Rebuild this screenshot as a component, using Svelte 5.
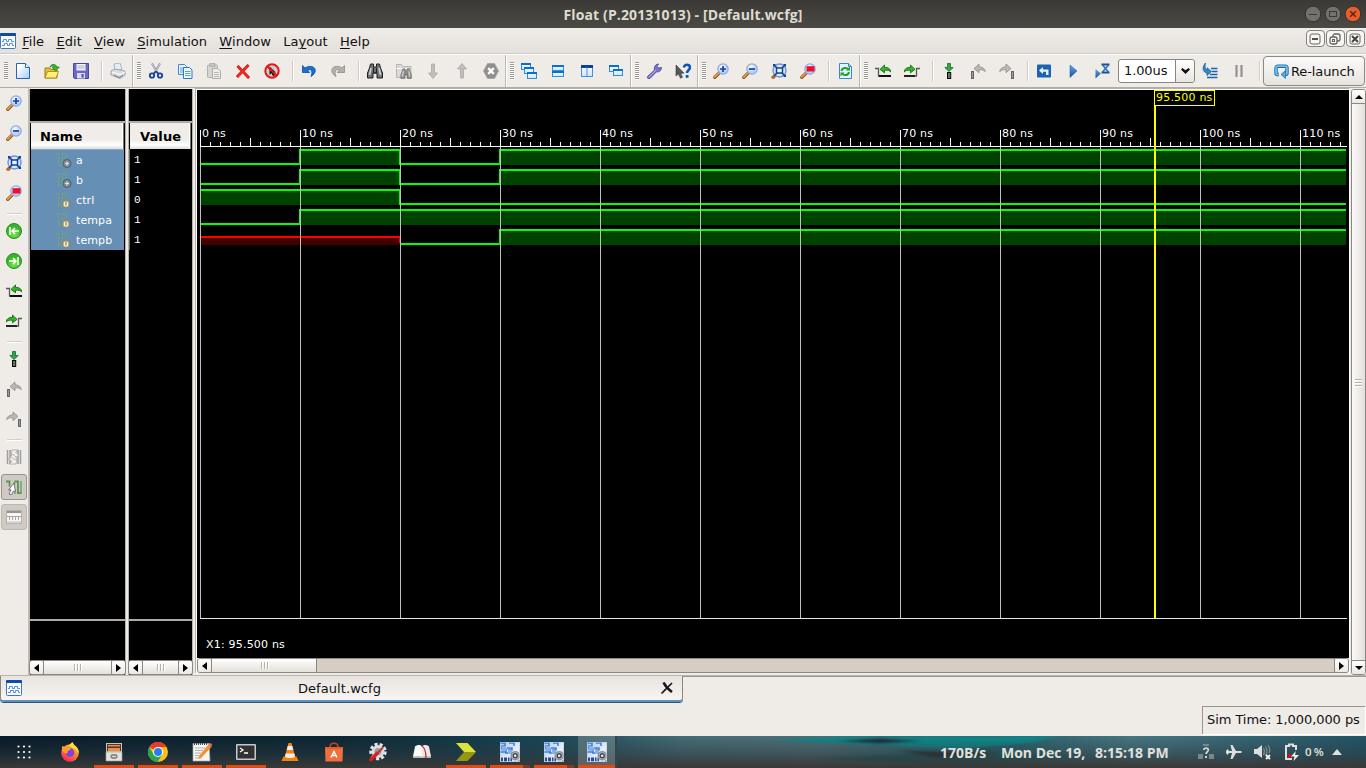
<script>
  const menus = ['File', 'Edit', 'View', 'Simulation', 'Window', 'Layout', 'Help'];
  const hot = { Layout: 2 };

  const lens = '<path d="M1.8 14.4 7 9.2" stroke="#8a4a12" stroke-width="3.2" stroke-linecap="round"/><path d="M1.8 14 6.6 9.2" stroke="#e39a3c" stroke-width="1.8" stroke-linecap="round"/><circle cx="10" cy="6" r="5.2" fill="url(#glass)" stroke="#8fa6e6" stroke-width="1.2"/>';
  const greenLeft = '<path d="M5 5.4 9.5 1v2.4c3.5-.2 6 1.200 6.300 4.600-1.300-1.600-3.200-2-6.300-1.800v2.600z" fill="#35b528" stroke="#0e6d14" stroke-width=".9"/>';
  const greenRight = '<path d="M11 5.400 6.500 1v2.400C3 3.200.5 4.600.2 8 1.500 6.400 3.400 6 6.500 6.200v2.600z" fill="#35b528" stroke="#0e6d14" stroke-width=".9"/>';
  const wfile = '<rect x=".5" y=".5" width="15" height="15" rx="1" fill="#f7faff" stroke="#4275c4"/><rect width="16" height="3" rx="1" fill="#0c4ba8"/><path d="M2 8.500h1.500v-2h3v2h2v-2h3v2H14M2 12.500h2.500v-2h3v2h2v-2h3v2H14" fill="none" stroke="#4c7fe0" stroke-width=".9"/>';
  const bino = '<path d="M3.500 1h3v3h3V1h3l1 4 2 5v5h-5.500v-5H6v5H.500v-5l2-5z" fill="#707476" stroke="#1e1f20"/><path d="M4 5 2.500 12M12 5l1.500 7" stroke="#cfd3d6" stroke-width="1.600"/><path d="M6.500 5v5h3V5" fill="none" stroke="#1e1f20"/>';
  const win = (x, y, w, h) => `<rect x="${x}.5" y="${y}.5" width="${w}" height="${h}" fill="url(#pane)" stroke="#2b90e0"/><path d="M${x} ${y + 1}h${w + 1}" stroke="#0a6fd0" stroke-width="2"/>`;
  const art = {
    new: '<path d="M1.500.5h9l4 4v11h-13z" fill="url(#page)" stroke="#2c62b4"/><path d="M10.500.5v4h4" fill="#fff" stroke="#2c62b4"/>',
    open: '<path d="M1 5h5l1 1.500h6V15H1z" fill="#e2c43a" stroke="#9a7b12"/><path d="M3.500 8.500h11L12 15H1z" fill="#fff07a" stroke="#b3921a"/><path d="M6 4C7 .8 12 .2 12.600 4H15.300L11.500 8 8 4h2.300C10 2.300 8 2.500 6 4z" fill="#3cbc25" stroke="#147d18" stroke-width=".8"/>',
    save: '<path d="M.5.500h15v15h-14l-1-1z" fill="#6b68c8" stroke="#4a4799"/><path d="M3.500 1h9v6.500h-9z" fill="#f4f4fb"/><path d="M4.500 3h7M4.500 5h7" stroke="#a9a9c0"/><path d="M4 10h8v5.500H4z" fill="#dcdcf0"/><path d="M8.500 11h2.200v3.500H8.500z" fill="#5553a8"/>',
    print: '<path d="m4 1 6-1 2 6-7 2z" fill="#e3edf7" stroke="#a3b6cc"/><path d="M1 8l4-2 10 2v4l-5 3.500L1 12z" fill="#dcdcdf" stroke="#a3a3a8"/><path d="m2 9 8 2.500L15 9" fill="none" stroke="#fff"/><path d="m4 12 5 2.500 4-2.200" fill="none" stroke="#6f7c8d"/>',
    cut: '<path d="M4 .5 10 11M12 .5 6 11" stroke="#8591a0" stroke-width="2"/><path d="M4.200 1 9 9.500M11.800 1 7 9.500" stroke="#dfe5ec" stroke-width=".7"/><circle cx="4" cy="12.500" r="2.200" fill="none" stroke="#16419e" stroke-width="1.800"/><circle cx="12" cy="12.500" r="2.200" fill="none" stroke="#16419e" stroke-width="1.800"/><path d="m5.500 10.500 2.500-2 2.500 2" fill="none" stroke="#16419e" stroke-width="1.600"/>',
    copy: '<path d="M1.500 1.500h6l2 2v8h-8z" fill="#e7f3ff" stroke="#3b8ad6"/><path d="M3 5h4M3 7h3M3 9h3" stroke="#5aa2e2"/><path d="M6.500 4.500h6l2.500 2.500v8.500H6.500z" fill="#f0f8ff" stroke="#2a7ac8"/><path d="M8 8.500h5.500M8 10.500h5.500M8 12.500h5.500" stroke="#5aa2e2"/>',
    paste: '<rect x="1.500" y="2" width="10" height="12.500" rx="1" fill="#d7d5d1" stroke="#b3b1ad"/><rect x="4" y=".5" width="5" height="3" fill="#c5c3bf" stroke="#aaa8a4" stroke-width=".7"/><path d="M6.500 5.500h5.500l2.500 2.500v7.500h-8z" fill="#eeedea" stroke="#b0aeaa"/><path d="M8 9.500h5M8 11.500h5M8 13.500h5" stroke="#bcbab6"/>',
    del: '<path d="m2.500 3 11.500 12M13.500 2 2 14" stroke="#c81010" stroke-width="2.800"/><path d="m2.500 3 11.500 12M13.500 2 2 14" stroke="#fb2418" stroke-width="2"/>',
    stop: '<circle cx="8" cy="8" r="6.700" fill="#cfcdca" stroke="#e81515" stroke-width="2"/><path d="M5.500 3.500V12l2-1.800 1.500 3 2-1-1.400-2.800H12z" fill="#17181a"/><path d="m3.500 3.500 9 9" stroke="#e81515" stroke-width="2"/>',
    undo: '<path d="M1.500 2.500v7h7.200L6.600 7.300C9.500 5.500 12.500 7.500 10 13.500 16 10 15.500 3.600 9.500 3.400 7.200 3.300 5.300 4 3.900 5z" fill="#1971cf" stroke="#0b479d" stroke-width=".8"/>',
    redo: '<path d="M14.500 2.500v7H7.300L9.400 7.300C6.500 5.500 3.500 7.500 6 13.500 0 10 .5 3.600 6.500 3.400c2.300-.1 4.200.6 5.600 1.600z" fill="#b3b1ae" stroke="#8c8a87" stroke-width=".8"/>',
    find: bino,
    findf: '<path d="M.5 1.500h5l1.500 2h8v11H.500z" fill="#dbd9d6" stroke="#b7b5b1"/><path d="M.5 5.500h11" stroke="#fff"/><g transform="translate(4.500 5) scale(.7)" opacity=".6">' + bino + '</g>',
    down: '<path d="M6.500 1h3v9h3L8 15.500 3.500 10h3z" fill="#c0beba" stroke="#a9a7a3" stroke-width=".8"/>',
    up: '<path d="M6.500 15h3V6h3L8 .5 3.500 6h3z" fill="#c0beba" stroke="#a9a7a3" stroke-width=".8"/>',
    halt: '<path d="M4.500.5h7L15.500 8l-4 7.500h-7L.500 8z" fill="#8e8e8d" stroke="#aaa9a7"/><path d="m5.200 5.200 5.600 5.600m0-5.600-5.600 5.600" stroke="#fff" stroke-width="2.400"/>',
    cascade: win(0, 0, 9, 6) + win(3, 4, 9, 6) + win(6, 9, 9, 6),
    tileh: win(2, 2, 11, 5) + win(2, 8, 11, 5),
    tilev: '<rect x="2.500" y="2.500" width="11" height="11" fill="url(#pane)" stroke="#4a8ed8"/><path d="M2 3.500h12" stroke="#0b3f9e" stroke-width="3"/><path d="M8 4v9.500" stroke="#4a8ed8"/>',
    float: win(1, 2, 9, 6) + win(5, 6, 9, 6),
    wrench: '<path d="M1.500 13.500 8.500 7c-.8-3 1-6 4-6l-1.500 2.500 1 1.500 3.500-.5c0 3-2.500 5-5 4.300L4 15.500c-1.500 1-3.500-.5-2.500-2z" fill="#7975cf" stroke="#444091" stroke-width=".8"/><path d="m3 14 7-7" stroke="#b6b3ee"/>',
    help: '<path d="M1 2v11l2.500-2 2 4.200 2-1-2-4H9z" fill="#55585a" stroke="#36383a" stroke-width=".6"/><path d="M9 4.500C9 .8 15 .9 15 4.500c0 2.500-3 2.500-3 5.500" fill="none" stroke="#0d53ba" stroke-width="2.500"/><rect x="10.700" y="12" width="2.800" height="2.800" fill="#0d53ba"/>',
    zin: lens + '<path d="M7 6h6M10 3v6" stroke="#1c3d98" stroke-width="1.700"/>',
    zout: lens + '<path d="M7 6h6" stroke="#1c3d98" stroke-width="1.700"/>',
    zfull: '<path d="m1 15.500 3-3" stroke="#c26f1c" stroke-width="3.500"/><circle cx="8.500" cy="7.500" r="6.500" fill="#d8e8ff" stroke="#6d93e2" stroke-width="1.400"/><path d="m3 2 11 11M14 2 3 13" stroke="#16448c" stroke-width="1.600"/><rect x="5.500" y="5" width="6" height="5" fill="#e6f2ff" stroke="#16448c" stroke-width="1.500"/><path d="M2 1h3L2 4zM15 1h-3l3 3zM15 14h-3l3-3z" fill="#16448c"/>',
    zarea: lens + '<rect x="6.500" y="3.200" width="8" height="5.300" fill="#ee0d2b"/>',
    reload: '<path d="M2.500.5h9l3 3v12h-12z" fill="#e4f2ff" stroke="#3987cf"/><path d="M11.500.5v3h3" fill="#9bc8f0" stroke="#3987cf"/><path d="M4.500 8C5 4.500 10 4 11 6.500M12 9c-.5 3.500-5.500 4-6.500 1.500" fill="none" stroke="#1fa326" stroke-width="2"/><path d="M9 7.500h4v-4zM7.500 9.500h-4v4z" fill="#1fa326"/>',
    prev: '<g transform="translate(0 1)">' + greenLeft + '<path d="M0 4.500h3.500v7.500H16" fill="none" stroke="#57595a" stroke-width="1.300"/><path d="M4 12h12" stroke="#111" stroke-width="2"/></g>',
    next: '<g transform="translate(0 1)">' + greenRight + '<path d="M16 4.500h-3.500V12H0" fill="none" stroke="#57595a" stroke-width="1.300"/><path d="M0 12h11" stroke="#222" stroke-width="2"/></g>',
    marker: '<path d="M6.500.500h3v4h2.700L8 8.500 3.800 4.500h2.700z" fill="#31a64a" stroke="#136b2c" stroke-width=".8"/><rect x="6.500" y="9.500" width="3.200" height="6" fill="#68706a" stroke="#080808"/>',
    mprev: '<path d="M4 5.500 9 1v2.800c3.500.2 6 1.700 6.300 4.700-2-1.700-4-1.900-6.300-1.800v3z" fill="#bbb9b6" stroke="#8f8d8a" stroke-width=".8"/><rect x="1.500" y="8.500" width="2" height="7" fill="#999" stroke="#666"/>',
    mnext: '<path d="M12 5.500 7 1v2.800C3.500 4 1 5.500.7 8.500 2.700 6.800 4.700 6.600 7 6.700v3z" fill="#bbb9b6" stroke="#8f8d8a" stroke-width=".8"/><rect x="12.500" y="8.500" width="2" height="7" fill="#999" stroke="#666"/>',
    restart: '<rect x="1" y="1.500" width="14" height="13" rx="1" fill="#1d62b5"/><path d="m3 7.500 4-3.500v2.500h5.500V12H10V8.800H7V11z" fill="#e5f3ff"/>',
    run: '<path d="M5 2v12.500L12 8z" fill="url(#blue)" stroke="#1855a2" stroke-width=".5"/>',
    runfor: '<path d="M1.500 6v9.500L7 10.500z" fill="url(#blue)"/><path d="M7.500 1.500h8M7.500 9.500h8" stroke="#15539f" stroke-width="1.800"/><path d="m8.500 2 6 7m0-7-6 7" stroke="#2768b4" stroke-width="1.300"/>',
    step: '<path d="M3.500 0C-.5 4.500 1 9.500 5 10v2.500L9.500 8.500 5 4.800v2.500C3 6.500 2.500 3.500 3.500 0z" fill="#2490d0" stroke="#125b9f" stroke-width=".8"/><path d="M9 5.500h6.500M10 8.500h5.500M8 11.500h7.500M5 14.500h10.500" stroke="#1c62ad" stroke-width="1.300"/>',
    pause: '<path d="M5.500 2v12M10.500 2v12" stroke="#94928f" stroke-width="2.200"/>',
    first: '<circle cx="8" cy="8" r="7.500" fill="url(#ball)" stroke="#26901f"/><path d="M4 4v8M13 8H6.500M9 5 6 8l3 3" fill="none" stroke="#fff" stroke-width="1.500"/>',
    last: '<circle cx="8" cy="8" r="7.500" fill="url(#ball)" stroke="#26901f"/><path d="M12 4v8M3 8h6.500M7 5l3 3-3 3" fill="none" stroke="#fff" stroke-width="1.500"/>',
    swap: '<path d="M1.500 1v14M4 1v14M12 1v14M14.500 1v14" stroke="#a19f9b" stroke-width="1.500"/><path d="M6 1h6L9.500 3.500 13 6l-3 2-3-3-2 2zM10 15H3l3-2.500L2.500 10l3-2 3 3L11 9z" fill="#f3f1ee" stroke="#9d9b97" stroke-width=".7"/>',
    snap: '<path d="M0 2.500h3.500v5M8.500 2.500H12V14h3.500" fill="none" stroke="#5d9355" stroke-width="1.800"/><path d="M8.500 2.500V6M15 2v12M8 14h2" stroke="#6aa860" stroke-width="1.500"/><path d="M8 4 2.500 11l2.500-.2L3 15l2.500.8L7.500 12l2 .5z" fill="#fff" stroke="#555" stroke-width=".8"/>',
    table: '<rect x=".5" y="1.500" width="15" height="13" fill="#f7f6f4" stroke="#b5b3af"/><path d="M1 3h14" stroke="#96948f" stroke-width="2"/><path d="M1 7.500h14" stroke="#a9a7a2"/><path d="M3.500 8v3M6.500 8v3M9.500 8v3M12.500 8v3" stroke="#a9a7a2"/><path d="M1 13h14" stroke="#dad8d4" stroke-width="2"/>',
    wfile
  };

  const groups = [
    { head: 8, items: ['new', 'open', 'save', '|', 'print'] },
    { head: 9, items: ['cut', 'copy', 'paste', 'del', 'stop', '|', 'undo', 'redo', '|', 'find', 'findf', 'down', 'up', 'halt'] },
    { head: 9, items: ['cascade', 'tileh', 'tilev', 'float'] },
    { head: 9, items: ['wrench', 'help'] },
    { head: 9, items: ['zin', 'zout', 'zfull', 'zarea', '|', 'reload'] }
  ];
  const runItems = ['prev', 'next', '|', 'marker', 'mprev', 'mnext', '|', 'restart', 'run', 'runfor'];
  const side = ['zin', 'zout', 'zfull', 'zarea', '|', 'first', 'last', 'prev', 'next', '|', 'marker', 'mprev', 'mnext', '|', 'swap', 'snap', 'table'];

  const signals = [
    { name: 'a', value: '1', kind: 'port', spans: [[0, 10, 0], [10, 20, 1], [20, 30, 0], [30, 114.6, 1]] },
    { name: 'b', value: '1', kind: 'port', spans: [[0, 10, 0], [10, 20, 1], [20, 30, 0], [30, 114.6, 1]] },
    { name: 'ctrl', value: '0', kind: 'net', spans: [[0, 20, 1], [20, 114.6, 0]] },
    { name: 'tempa', value: '1', kind: 'net', spans: [[0, 10, 0], [10, 114.6, 1]] },
    { name: 'tempb', value: '1', kind: 'net', spans: [[0, 20, 'x'], [20, 30, 0], [30, 114.6, 1]] }
  ];
  // Wave canvas: time zero sits 3px from the left edge, 10px per nanosecond.
  const px = (ns) => 3 + ns * 10;
  const ticks = Array.from({ length: 115 }, (_, i) => i);
  const majors = ticks.filter((t) => t % 10 === 0);

  const apps = [
    { id: 'grid' }, { id: 'firefox' }, { id: 'files', on: 1 }, { id: 'chrome', on: 1 }, { id: 'edit', on: 1 },
    { id: 'term', on: 1 }, { id: 'vlc' }, { id: 'store' }, { id: 'tools' }, { id: 'book' },
    { id: 'xil', on: 1 }, { id: 'isim', on: 2 }, { id: 'isim', on: 2 }, { id: 'isim', on: 1, active: true }
  ];
  const isim = '<rect width="20" height="20" fill="url(#sim)"/><path d="M0 1h5v3H2v3h4v3H0M7 6h5v2H9v3H5M9 1h5v3" fill="none" stroke="#3f7ed6" stroke-width="1.500"/><path d="M2 4h4v5H2zM8 8h4v4H8z" fill="#86b1ea"/><path d="M0 14.500h13V20H0z" fill="#dfe5f0"/><path d="M1 15.500h2v4H1zM4 15.500h3v4H4zM8 15.500h1.500v4H8zM10.500 15.500h1.500v4h-1.500z" fill="#274a94"/><circle cx="15.200" cy="13.700" r="4" fill="#c7ccd4" stroke="#8c929b" stroke-width="1.500"/><circle cx="15.200" cy="13.700" r="2" fill="#eceef0" stroke="#3d4248" stroke-width="1.400"/><path d="M18 18h2v2h-2z" fill="#e08080"/><rect x=".3" y=".3" width="19.400" height="19.400" fill="none" stroke="#b9c6dc" stroke-width=".6"/>';
  const appArt = {
    grid: [4.500, 10, 15.500].map((y) => [4.500, 10, 15.500].map((x) => `<circle cx="${x}" cy="${y}" r="1.100" fill="#fff"/>`).join('')).join(''),
    firefox: '<circle cx="10" cy="11" r="8.800" fill="url(#fox)"/><path d="M9 4c3-5 4-3.500 4-3.500.2 3 6 4 5.800 11C17 7.500 14 6 9 4z" fill="#ffdf38"/><circle cx="10" cy="10.500" r="4.300" fill="#7944d8"/><path d="M2 4c2 .5 4 2 7 2 2 0 2 2 0 2.500C7 9 7 10 8 11c-3 1-5-.5-6-3z" fill="#ff9e23"/>',
    files: '<path d="M2 1h16v18H2z" fill="#c7c5c0"/><path d="M3 2h14v7H3z" fill="#51372b"/><path d="M4 3h12v1.500H4zM4 6h12v3H4z" fill="#ee8d45"/><path d="M2 10h16v9H2z" fill="#e4e2de" stroke="#a09e9a" stroke-width=".6"/><rect x="7" y="13" width="6" height="3" rx="1.500" fill="none" stroke="#76746f" stroke-width="1.300"/>',
    chrome: '<circle cx="10" cy="10" r="10" fill="#fbc116"/><path d="M10 10 1.300 5A10 10 0 0 1 18.700 5H10z" fill="#e33b2e"/><path d="M1.300 5A10 10 0 0 0 9.500 20l4.800-7.500H5.700z" fill="#2da44e"/><circle cx="10" cy="10" r="5.100" fill="#fff"/><circle cx="10" cy="10" r="4" fill="#2c7de9"/>',
    edit: '<path d="M1 1.500h16l1 17.500H1z" fill="#f5f5f3" stroke="#aaa" stroke-width=".7"/><path d="M2 2h14" stroke="#4b4b4b" stroke-width="2" stroke-dasharray="1 1"/><path d="M3 6h10M3 8.500h8M3 11h6M3 13.500h4M3 16h7" stroke="#b2b2b0"/><path d="m7 14 9-11 3.500 2L10 15l-4 2z" fill="#f39330"/><path d="m16 3 3.500 2 .5-3-2-1z" fill="#e57165"/>',
    term: '<rect x="0" y="2" width="20" height="16" rx="1" fill="#c9c8c6"/><rect x="1.500" y="3.500" width="17" height="13" fill="#313235"/><path d="m4 6 3 2-3 2M8 11h4" fill="none" stroke="#fff" stroke-width="1.300"/>',
    vlc: '<path d="M3.500 14.500h13L18.500 19h-17z" fill="#f28310"/><path d="M8.500 1h3l4 15h-11z" fill="#f58616"/><path d="m7.700 4-1 4h6.600l-1-4zM5.700 11.500l-.8 3c2 2 8 2 10.200 0l-.8-3z" fill="#eeece8"/>',
    store: '<path d="M1 5h18l-.5 14.500h-17z" fill="#ef703d"/><path d="M6 5C6 0 14 0 14 5" fill="none" stroke="#c7421d" stroke-width="1.500"/><path d="M1 5h18v2H1z" fill="#e2602f"/><path d="m7 15.500 3-6 3 6M8 13.500h4" fill="none" stroke="#fff" stroke-width="1.400"/>',
    tools: '<circle cx="10" cy="9.500" r="7" fill="none" stroke="#e4e4e4" stroke-width="3.500" stroke-dasharray="3 1.900"/><circle cx="10" cy="9.500" r="5" fill="#9b9da2" stroke="#dcdcdc" stroke-width="3"/><path d="M3 17.500 9 11.500" stroke="#d82029" stroke-width="3.800" stroke-linecap="round"/><path d="m9 11.500 6-6" stroke="#c33036" stroke-width="2"/>',
    book: '<path d="M3 4 1 16h18L17 4z" fill="#b8b8b5"/><path d="M3.500 4C6 2.500 9 3 10 4.500V15c-2-1.500-6-1-9-.5z" fill="#fafaf8"/><path d="M16.500 4C14 2.500 11 3 10 4.500V15c2-1.500 6-1 9-.5z" fill="#e9e9e6"/><path d="M9.500 4c3 1 4.500 4 4.500 12" fill="none" stroke="#cc2930" stroke-width="1.300"/>',
    xil: '<path d="M0 1h11.500l8.500 9H8z" fill="#dde23a"/><path d="M8 10h12l-8.500 9H0z" fill="#949712"/>',
    isim
  };
</script>

{#snippet icon(id)}
  <svg class="ico" width="16" height="16" viewBox="0 0 16 16" fill="none">{@html art[id]}</svg>
{/snippet}

{#snippet tools(items)}
  {#each items as it}
    {#if it === '|'}<span class="sep"></span>{:else}<span class="tool">{@render icon(it)}</span>{/if}
  {/each}
{/snippet}

{#snippet hscroll(cls)}
  <div class="hs {cls}">
    <span class="btn"><i class="arr left"></i></span>
    <span class="thumb"><i></i><i></i><i></i></span>
    <span class="trough"></span>
    <span class="btn"><i class="arr right"></i></span>
  </div>
{/snippet}

<svg class="defs" width="0" height="0">
  <defs>
    <radialGradient id="glass" cx=".4" cy=".3"><stop offset="0" stop-color="#fff" /><stop offset="1" stop-color="#b5d2fb" /></radialGradient>
    <linearGradient id="page" x1="0" y1="0" x2="1" y2="1"><stop offset=".2" stop-color="#fff" /><stop offset="1" stop-color="#a5ccf8" /></linearGradient>
    <linearGradient id="pane" x1="0" y1="0" x2="0" y2="1"><stop offset="0" stop-color="#fff" /><stop offset="1" stop-color="#cfe4fa" /></linearGradient>
    <linearGradient id="blue" x1="0" y1="0" x2="0" y2="1"><stop offset="0" stop-color="#69a5e3" /><stop offset="1" stop-color="#1454a6" /></linearGradient>
    <linearGradient id="sim" x1="0" y1="0" x2="1" y2="1"><stop offset="0" stop-color="#a9c8f0" /><stop offset=".6" stop-color="#e9eff9" /><stop offset="1" stop-color="#ccd8ea" /></linearGradient>
    <radialGradient id="ball" cx=".5" cy=".7"><stop offset="0" stop-color="#7be94c" /><stop offset="1" stop-color="#39b32b" /></radialGradient>
    <linearGradient id="fox" x1=".8" y1="0" x2=".2" y2="1"><stop offset="0" stop-color="#ffcf2c" /><stop offset=".5" stop-color="#ff7238" /><stop offset="1" stop-color="#ed1e66" /></linearGradient>
  </defs>
</svg>

<div class="screen">
  <header class="title">
    <span class="caption">Float (P.20131013) - [Default.wcfg]</span>
    <div class="wbtns">
      <svg width="18" height="18"><circle cx="9" cy="9" r="7.800" fill="#73716b" stroke="#33322e" /><path d="M5 9.500h8" stroke="#3b3a36" /></svg>
      <svg width="18" height="18"><circle cx="9" cy="9" r="7.800" fill="#73716b" stroke="#33322e" /><rect x="5.500" y="6.500" width="7" height="5" fill="none" stroke="#3b3a36" /></svg>
      <svg width="18" height="18"><circle cx="9" cy="9" r="7.800" fill="#ec5b2c" stroke="#33322e" /><path d="m6.200 6.200 5.600 5.600m0-5.600-5.600 5.600" stroke="#47251a" stroke-width="1.300" /></svg>
    </div>
  </header>

  <nav class="menu">
    {@render icon('wfile')}
    {#each menus as m}
      {@const k = hot[m] ?? 0}
      <span>{m.slice(0, k)}<u>{m[k]}</u>{m.slice(k + 1)}</span>
    {/each}
    <div class="mdi">
      <b><svg width="12" height="12"><rect x="1" y="1" width="10" height="10" rx="2" fill="none" stroke="#66635f" /><path d="M3 6h6" stroke="#55524e" stroke-width="2" /></svg></b>
      <b><svg width="12" height="12"><rect x="4" y="1" width="7" height="7" rx="2" fill="none" stroke="#66635f" stroke-width="1.300" /><rect x="1" y="4" width="7" height="7" rx="2" fill="#f5f4f2" stroke="#66635f" stroke-width="1.300" /><rect x="3.500" y="6.500" width="2" height="2" fill="none" stroke="#66635f" /></svg></b>
      <b><svg width="12" height="12"><rect x="1" y="1" width="10" height="10" rx="2" fill="none" stroke="#66635f" /><path d="m3 3 6 6m0-6-6 6" stroke="#45423f" stroke-width="2" /></svg></b>
    </div>
  </nav>

  <div class="toolbar">
    {#each groups as g}
      <div class="group"><span class="head" style="width:{g.head}px"></span>{@render tools(g.items)}</div>
    {/each}
    <div class="group last">
      <span class="head" style="width:9px"></span>
      {@render tools(runItems)}
      <div class="combo"><span>1.00us</span><em><svg width="9" height="7"><path d="M0 1.500 4.500 6 9 1.500 7.500 0 4.500 2.200 1.500 0z" fill="#111" /></svg></em></div>
      {@render tools(['step', 'pause', '|'])}
      <div class="relaunch">
        <svg width="15" height="15" viewBox="0 0 15 15"><path d="M5 10.500H3.500Q2 10.500 2 9V4Q2 2.200 4 2.200h7q2 0 2 1.800v5q0 1.500-1.500 1.500" fill="none" stroke="#1d6ba8" stroke-width="3.400" /><path d="M5 10.500H3.500Q2 10.500 2 9V4Q2 2.200 4 2.200h7q2 0 2 1.800v5q0 1.500-1.500 1.500" fill="none" stroke="#69bdf0" stroke-width="1.800" /><path d="M11.500 6.500v8l-4.500-4z" fill="#4baae6" stroke="#1d6ba8" stroke-width=".7" /></svg>
        <span>Re-launch</span>
      </div>
    </div>
  </div>

  <main>
    <aside>
      {#each side as it}
        {#if it === '|'}<span class="hsep"></span>{:else}
          <span class="stool" class:pressed={it === 'snap' || it === 'table'}>{@render icon(it)}</span>
        {/if}
      {/each}
    </aside>

    <section class="col names">
      <div class="top"></div>
      <div class="hd">Name</div>
      <div class="rows">
        {#each signals as s}
          <div class="row">
            <svg width="18" height="20" fill="none"><path d="M0 3.500h3.500v12H7M7.500 15V3.500h3.500V9" stroke="#74a080" stroke-width="1.200" />
              {#if s.kind === 'port'}<circle cx="12" cy="13.500" r="4" fill="#7f8b94" stroke="#505d68" /><path d="M10 13.500h4M12 11.500v4" stroke="#e2e6ea" stroke-width="1.200" />
              {:else}<circle cx="11" cy="14" r="4" fill="#b5ad8e" stroke="#84836f" /><path d="M9.500 12v4h3v-4" stroke="#f0ecda" />{/if}
            </svg>
            <span class:focus={s.name === 'tempb'}>{s.name}</span>
          </div>
        {/each}
      </div>
      <div class="foot"></div>
      {@render hscroll('n')}
    </section>
    <section class="col values">
      <div class="top"></div>
      <div class="hd">Value</div>
      <div class="rows">
        {#each signals as s}<div class="row">{s.value}</div>{/each}
      </div>
      <div class="foot"></div>
      {@render hscroll('v')}
    </section>

    <section class="wave">
      <svg class="plot" width="1152" height="568" shape-rendering="crispEdges">
        <rect width="1152" height="568" fill="#000" />
        {#each signals as s, r}
          {@const y = 59 + r * 20}
          {#each s.spans as [from, to, v], i}
            {@const x = px(from)}
            {@const w = (to - from) * 10}
            {#if v === 1}
              <rect {x} {y} width={w} height="16" fill="#004200" />
              <rect {x} {y} width={w} height="2" fill="#00ff00" />
            {:else if v === 0}
              <rect {x} y={y + 14} width={w} height="2" fill="#00ff00" />
            {:else}
              <rect {x} y={y + 7} width={w} height="9" fill="#420000" />
              <rect {x} y={y + 7} width={w} height="2" fill="#ff0000" />
            {/if}
            {#if i > 0}
              {@const bad = s.spans[i - 1][2] === 'x'}
              <rect x={x - 1} y={bad ? y + 7 : y} width="1" height={bad ? 7 : 16} fill={bad ? '#ff0000' : '#00ff00'} />
            {/if}
          {/each}
        {/each}
        {#each ticks as t}
          <rect x={px(t)} y={t % 10 === 0 ? 40 : t % 5 === 0 ? 48 : 52} width="1" height={t % 10 === 0 ? 17 : t % 5 === 0 ? 9 : 5} fill="#fff" />
        {/each}
        {#each majors as t}
          <rect x={px(t)} y="57" width="1" height="472" fill="#c0c0c0" />
          <text x={px(t) + 2} y="47">{t} ns</text>
        {/each}
        <rect x="3" y="56" width="1147" height="1" fill="#fff" />
        <rect x="3" y="528" width="1147" height="1" fill="#e8e8e8" />
        <rect x="957" y="0" width="2" height="528" fill="#ffff00" />
        <rect x="957.500" y=".5" width="60" height="15" fill="#000" stroke="#ffff00" />
        <text x="959" y="11" class="cursor">95.500 ns</text>
        <text x="9" y="558">X1: 95.500 ns</text>
      </svg>
      {@render hscroll('w')}
    </section>

    <div class="vs">
      <span class="btn"><i class="arr up"></i></span>
      <span class="thumb"><i></i><i></i><i></i></span>
      <span class="btn"><i class="arr down"></i></span>
    </div>
  </main>

  <div class="tabs">
    <div class="tab">
      {@render icon('wfile')}
      <span>Default.wcfg</span>
      <svg width="14" height="14"><path d="M3.500 1.500c1.500 3 5 7 8.500 9.500" stroke="#181818" stroke-width="2.600" fill="none" /><path d="M12 2C9 5 5 9 1.500 12.500" stroke="#181818" stroke-width="1.700" /></svg>
    </div>
  </div>
  <div class="status"><span>Sim Time: 1,000,000 ps</span></div>

  <footer>
    <svg class="wall" width="1366" height="32" preserveAspectRatio="none">
      <defs>
        <linearGradient id="w1"><stop offset="0" stop-color="#061a28" /><stop offset=".25" stop-color="#0a2734" /><stop offset=".4" stop-color="#174657" /><stop offset=".5" stop-color="#456d76" /><stop offset=".6" stop-color="#517078" /><stop offset=".72" stop-color="#225f68" /><stop offset=".83" stop-color="#477783" /><stop offset="1" stop-color="#205466" /></linearGradient>
        <linearGradient id="w2" x1="0" y1="0" x2="0" y2="1"><stop offset="0" stop-color="#363534" stop-opacity="0" /><stop offset=".5" stop-color="#2d3940" stop-opacity=".45" /><stop offset="1" stop-color="#3c3835" /></linearGradient>
        <filter id="soft"><feGaussianBlur stdDeviation="5 1" /></filter>
      </defs>
      <rect width="1366" height="32" fill="url(#w1)" />
      <g filter="url(#soft)">
        <path d="M765 4 840 1 1060 0 1030 7 960 13 870 9z" fill="#11898c" />
        <path d="M840 5 880 2 920 5 880 8z" fill="#193243" />
        <path d="M815 23 930 17 1080 19 960 28z" fill="#176061" />
        <path d="M900 15 1000 17 940 23z" fill="#2c2b2b" />
      </g>
      <rect width="1366" height="32" fill="url(#w2)" />
    </svg>
    <div class="bar">
      {#each apps as a}
        <span class="app" class:active={a.active} class:on={a.on} class:multi={a.on === 2}>
          <svg width="20" height="20" viewBox="0 0 20 20">{@html appArt[a.id]}</svg>
        </span>
      {/each}
      <div class="clock"><span class="rate">170B/s</span><span class="date">Mon Dec 19,</span><span class="time">8:15:18 PM</span></div>
      <div class="tray">
        <svg width="16" height="16"><path d="M0 10h5v5H0zM11 10h5v5h-5zM5 0h6v2H5z" fill="#7c8689" /><path d="M5.700 6c0-2.500 4.600-2.500 4.600 0 0 2-2.300 2-2.300 4" fill="none" stroke="#d4d8d8" stroke-width="1.700" /><path d="M7 12h2v2H7z" fill="#d4d8d8" /></svg>
        <svg width="16" height="16"><path d="M0 7.200 1.200 5l2 2H6L4.500 1H6.500L10 7h4q2 0 2 1t-2 1h-4L6.500 15h-2L6 9H3.200l-2 2L0 8.800z" fill="#dededb" /></svg>
        <svg width="18" height="16"><path d="M0 5h3l5-4v13l-5-4H0z" fill="#dededb" /><path d="M9.500 4q2 3.500 0 7M11.500 2.500q3 5 0 9M14 1q3 5 1 8" fill="none" stroke="#7c8689" stroke-width="1.300" /><path d="m12 11 4 4m0-4-4 4" stroke="#f2f2f0" stroke-width="1.800" /></svg>
        <svg width="16" height="18"><path d="M8 16H2V3h3V1.500h4V3h3v4" fill="none" stroke="#dededb" stroke-width="2" /><path d="M4 11h3.500v3.500H4z" fill="#d01414" /><path d="m12 8-5 5.500h3.500L9.500 18 15 12h-4z" fill="#f2f2f0" /></svg>
        <span>0&#8202;%</span>
        <svg width="10" height="6"><path d="M0 6 5 0l5 6z" fill="#dededb" /></svg>
      </div>
    </div>
  </footer>
</div>

<style>
  :global(body) { margin: 0; overflow: hidden; }
  .screen { width: 1366px; height: 768px; display: flex; flex-direction: column; background: #efebe7; font: 13px "DejaVu Sans", sans-serif; color: #111; overflow: hidden; }
  .screen :global(svg) { display: block; flex: none; }
  .defs { position: absolute; }
  span, b, i, em { box-sizing: border-box; }

  .title { height: 28px; display: grid; grid-template-columns: 1fr auto 1fr; align-items: center; background: linear-gradient(#3a3935, #4c4a44); flex: none; }
  .caption { grid-column: 2; color: #dfdbd2; font: bold 14px "Open Sans", sans-serif; letter-spacing: .12px; white-space: nowrap; }
  .wbtns { display: flex; gap: 2px; justify-content: flex-end; padding-right: 4px; }

  .menu { height: 26px; flex: none; display: flex; align-items: center; gap: 12.200px; background: linear-gradient(#efece9, #e4e1dc); border-bottom: 1px solid #cfccc7; box-sizing: border-box; letter-spacing: .06px; }
  .menu > :global(svg) { margin-right: -6px; }
  .menu > span { padding-top: 2px; }
  .menu u { text-underline-offset: 2px; text-decoration-thickness: 1px; }
  .mdi { margin-left: auto; display: flex; gap: 1.500px; padding-right: 1.500px; align-self: flex-start; padding-top: 2px; }
  .mdi b { width: 18.500px; height: 17px; border: 1px solid #85827e; border-radius: 4px; display: flex; align-items: center; justify-content: center; background: #f7f6f4; }

  .toolbar { height: 34px; flex: none; display: flex; box-sizing: border-box; border-top: 1px solid #fff; border-bottom: 1px solid #b0aca6; background: #efece7; }
  .group { display: flex; height: 32px; align-items: center; box-shadow: 1px 0 #bab6b1, 2px 0 #fff; }
  .group.last { flex: 1; box-shadow: none; }
  .head { height: 18px; flex: none; background: repeating-linear-gradient(#9b9894 0 1px, #fff 1px 2px) 5px 0 / 4px 18px no-repeat; }
  .group:first-child .head { background-position: 4px 0; }
  .tool { width: 29px; padding-left: 7px; flex: none; }
  .sep { width: 8px; height: 20px; flex: none; background: linear-gradient(90deg, #cfcbc6 50%, #fff 50%) 6px 0 / 2px 20px no-repeat; }
  .combo { width: 77px; height: 24px; margin: 0 0 0 2px; box-sizing: border-box; border: 1px solid #88847f; border-radius: 3px; background: #fff; display: flex; flex: none; }
  .combo span { width: 56px; padding: 3px 0 0 5px; line-height: 16px; letter-spacing: -.1px; }
  .combo em { flex: 1; border-left: 1px solid #88847f; background: linear-gradient(#fff, #e8e5e0); display: flex; align-items: center; justify-content: center; border-radius: 0 3px 3px 0; }
  .relaunch { flex: 1; margin: 0 1px 0 2px; height: 28px; border: 1px solid #8d8984; border-radius: 4px; background: linear-gradient(#fbfaf9, #e7e4df); display: flex; align-items: center; gap: 2px; padding-left: 10px; white-space: nowrap; letter-spacing: -.1px; }

  main { height: 587px; flex: none; display: flex; }
  aside { width: 28px; flex: none; border-right: 1px solid #c0bcb7; display: flex; flex-direction: column; }
  .stool { height: 30px; flex: none; display: flex; align-items: center; padding-left: 6px; }
  .stool.pressed { height: 26px; margin: 2px 1px; padding-left: 4px; background: #cfcac4; border: 1px solid #97928d; border-radius: 3px; }
  .stool.pressed + .stool.pressed { border-color: #bcb7b1; }
  .hsep { height: 8px; flex: none; background: linear-gradient(#d3cfca 50%, #fff 50%) 7px 5px / 15px 2px no-repeat; }

  .col { display: flex; flex-direction: column; margin-top: 1px; background: #000; border: solid #b5b0aa; border-width: 0 1px; box-sizing: border-box; flex: none; }
  .names { width: 97px; }
  .values { width: 65px; margin-left: 2px; }
  .top { height: 32px; border-bottom: 2px solid #b0aca5; }
  .hd { height: 26px; box-sizing: border-box; margin: 0 1px; background: linear-gradient(#f0ede9 65%, #fff 85%, #dedad4); border-right: 1px solid #77736e; box-shadow: inset -1px 0 #fff; font-weight: bold; padding: 6px 0 0 9px; line-height: 16px; color: #000; letter-spacing: .1px; }
  .values .hd { padding-left: 10px; }
  .rows { height: 101px; font-size: 11px; }
  .names .rows { background: #658fb5; margin: 0 1px; border-top: 1px solid #8aa9c4; box-sizing: border-box; }
  .values .rows { border-left: 1px solid #666; box-sizing: border-box; padding-top: 1px; }
  .row { height: 20px; display: flex; align-items: center; color: #fff; }
  .names .row { padding-left: 24px; }
  .names .row span { padding: 1px 4px 0 3px; line-height: 18px; letter-spacing: .1px; }
  .names .row span.focus { flex: 1; outline: 1px dotted #7d8a94; outline-offset: -1px; }
  .values .row { padding-left: 4px; font: 11px "Liberation Mono", monospace; }
  .foot { flex: 1; background: linear-gradient(#b0aca5, #b0aca5) 0 369px / 100% 2px no-repeat; }

  .hs { height: 15px; flex: none; display: flex; background: #d6cdc4; box-sizing: border-box; border: 1px solid #8b8781; border-radius: 3px; }
  .btn { width: 13px; flex: none; display: flex; align-items: center; justify-content: center; background: linear-gradient(#fff, #ebe8e4); border-radius: 2px; }
  .hs.n, .hs.v { margin: 0 -1px; }
  .hs .thumb { display: flex; gap: 2px; align-items: center; justify-content: center; border: solid #8b8781; border-width: 0 1px; background: linear-gradient(#fff, #e4e0db); }
  .hs .thumb i { width: 1px; height: 7px; background: #b6b2ac; box-shadow: 1px 0 #fff; }
  .hs.n .thumb, .hs.v .thumb { flex: 1; }
  .hs.n .trough, .hs.v .trough { display: none; }
  .hs.w .thumb { width: 106px; flex: none; }
  .hs.w .trough { flex: 1; border-right: 1px solid #8b8781; }
  .arr { width: 0; height: 0; border: 4px solid transparent; }
  .arr.left { border-width: 4px 5px 4px 0; border-right-color: #000; }
  .arr.right { border-width: 4px 0 4px 5px; border-left-color: #000; }
  .arr.up { border-width: 0 4px 4px; border-bottom-color: #000; }
  .arr.down { border-width: 4px 4px 0; border-top-color: #000; }

  .wave { width: 1152px; flex: none; margin: 1px 0 0 3px; border: solid #fff; border-width: 1px 1px 0 1px; box-shadow: -1px -1px #b5b0aa; height: 584px; }
  .plot text { font: 11px "DejaVu Sans", sans-serif; fill: #fff; letter-spacing: .2px; }
  .plot text.cursor { fill: #ff0; }
  .vs { width: 15px; margin: 1px 0 0 1px; display: flex; flex-direction: column; border: 1px solid #8b8781; border-radius: 3px; box-sizing: border-box; flex: none; }
  .vs .btn { width: auto; height: 13px; }
  .vs .thumb { flex: 1; border: solid #8b8781; border-width: 1px 0; background: linear-gradient(90deg, #fbfaf9, #e2deda); display: flex; flex-direction: column; align-items: center; justify-content: center; gap: 2px; }
  .vs .thumb i { width: 7px; height: 1px; background: #b6b2ac; box-shadow: 0 1px #fff; }

  .tabs { height: 28px; flex: none; display: flex; border-top: 1px solid #b8b4ae; box-sizing: border-box; }
  .tabs::after { content: ""; flex: 1; border-top: 1px solid #999590; }
  .tab { width: 683px; height: 26px; box-sizing: border-box; display: grid; grid-template-columns: 22px 1fr 22px; align-items: center; border: solid #8b8781; border-width: 0 1px 0 1px; border-bottom: 2px solid #6191bd; box-shadow: 0 1px #2e5476; border-radius: 0 0 4px 4px; background: linear-gradient(#e8e3df, #f7f4f1); }
  .tab > :global(svg:first-child) { margin-left: 5px; }
  .tab span { text-align: center; padding-right: 4px; letter-spacing: .08px; }
  .status { height: 33px; flex: none; display: flex; justify-content: flex-end; align-items: flex-start; }
  .status span { width: 163px; height: 28px; margin: 3px 1px 0; border: solid #99948f; border-width: 1px 0 0 1px; box-shadow: 1px 1px #fff; padding: 5px 0 0 4px; line-height: 16px; white-space: nowrap; letter-spacing: -.07px; }

  footer { height: 32px; flex: none; display: grid; }
  footer > * { grid-area: 1 / 1; }
  .bar { display: flex; padding-left: 2px; z-index: 1; height: 32px; }
  .app { width: 40px; margin: 0 2px; height: 32px; flex: none; display: flex; justify-content: center; padding-top: 6px; }
  .app:first-child { margin-right: 4px; }
  .app.on { border-bottom: 3px solid #df4b16; }
  .app.multi { border-image: linear-gradient(90deg, #df4b16 31px, #7e3a26 31px) 3; }
  .app.active { width: 37px; background: #ffffff33; box-shadow: 2px 0 #364549; }
  .clock { width: 229px; margin-left: 323px; display: flex; align-items: center; color: #e2e0dc; font: bold 14px "Open Sans", sans-serif; white-space: nowrap; flex: none; }
  .rate { width: 61px; }
  .date { width: 94px; }
  .tray { display: flex; align-items: center; margin-left: 29px; gap: 12px; color: #e2e0dc; font: 600 11.500px "Open Sans", sans-serif; }
  .tray span { margin: 0 -4px 2px -7px; white-space: nowrap; letter-spacing: .5px; }
</style>
